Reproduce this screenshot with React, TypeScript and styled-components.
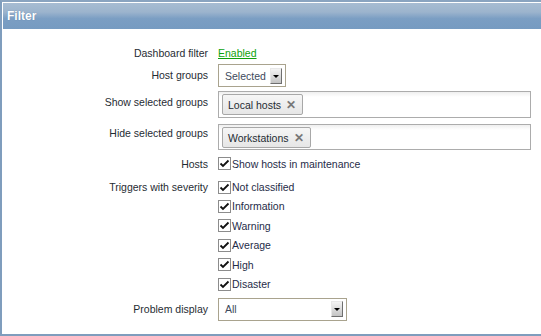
import styled, { createGlobalStyle } from "styled-components";

const GlobalStyle = createGlobalStyle`
  html, body {
    margin: 0;
    padding: 0;
    background: #ffffff;
  }
  body {
    font-family: "Liberation Sans", Arial, sans-serif;
    font-size: 10.5px;
    color: #1f2c33;
  }
`;

const Frame = styled.div`
  box-sizing: border-box;
  width: 541px;
  height: 336px;
  border-top: 2px solid #8aa4c0;
  border-left: 2px solid #7f9dbd;
  border-bottom: 2px solid #7f9dbd;
  padding: 1px 0 0 1px;
  display: flex;
  flex-direction: column;
`;

const Header = styled.div`
  height: 26px;
  display: flex;
  align-items: center;
  padding-left: 4px;
  background: linear-gradient(to bottom, #a7bcd2 0%, #9cb4cd 35%, #7b9ec3 60%, #769bc1 100%);
  color: #ffffff;
  font-weight: bold;
  font-size: 12px;
  text-shadow: 0 0 1px #5c7ea3;
`;

const Form = styled.div`
  display: flex;
  flex-direction: column;
  padding-top: 17px;
`;

const Row = styled.div<{ $gap?: number; $pad?: number }>`
  display: flex;
  align-items: flex-start;
  margin-top: ${(p) => p.$gap ?? 0}px;

  & > label {
    padding-top: ${(p) => p.$pad ?? 0}px;
  }
`;

const Label = styled.label`
  width: 205px;
  padding-right: 10px;
  text-align: right;
  line-height: 14px;
  flex-shrink: 0;
`;

const Control = styled.div`
  flex: 1;
  display: flex;
  flex-direction: column;
`;

const Link = styled.a`
  color: #0ca20c;
  text-decoration: underline;
  line-height: 14px;
`;

const Select = styled.div<{ $width: number }>`
  box-sizing: border-box;
  width: ${(p) => p.$width}px;
  height: 23px;
  border: 1px solid #a9a38e;
  display: flex;
  align-items: center;
  justify-content: space-between;
  padding: 0 3px 0 6px;
  color: #3d4a5c;
  background: #ffffff;
`;

const Arrow = styled.span`
  box-sizing: border-box;
  width: 12px;
  height: 16px;
  border: 1px solid #6f6f6f;
  border-top-color: #e8e8e8;
  border-left-color: #e8e8e8;
  background: linear-gradient(to bottom, #f4f4f4, #c4c4c4);
  display: flex;
  align-items: center;
  justify-content: center;

  &::after {
    content: "";
    border-left: 3px solid transparent;
    border-right: 3px solid transparent;
    border-top: 3px solid #000000;
    margin-top: 1px;
  }
`;

const Multi = styled.div<{ $height: number }>`
  box-sizing: border-box;
  width: 313px;
  height: ${(p) => p.$height}px;
  border: 1px solid #acacac;
  background: linear-gradient(to bottom, #efefef 0px, #ffffff 5px);
  padding: 2px 3px;
  display: flex;
  align-items: flex-start;
`;

const Chip = styled.span`
  box-sizing: border-box;
  height: 21px;
  display: inline-flex;
  align-items: center;
  gap: 5px;
  padding: 0 6px 0 5px;
  border: 1px solid #a8a8a8;
  border-radius: 2px;
  background: linear-gradient(to bottom, #f6f6f6, #e6e6e6);
  color: #1f2c33;
`;

const Remove = styled.span`
  color: #777777;
  font-weight: bold;
  font-size: 12px;
`;

const Check = styled.span`
  display: flex;
  align-items: center;
  height: 19.4px;
  line-height: 14px;
  color: #1f2c48;

  & svg {
    margin-right: 1px;
    flex-shrink: 0;
  }
`;

function Box() {
  return (
    <svg width="13" height="13" viewBox="0 0 13 13">
      <rect x="0.5" y="0.5" width="12" height="12" fill="#ffffff" stroke="#8c8c8c" />
      <path d="M2.5 6.5 L5 9 L10.5 3.5" fill="none" stroke="#111111" strokeWidth="1.8" />
    </svg>
  );
}

const severities = ["Not classified", "Information", "Warning", "Average", "High", "Disaster"];

export default function App() {
  return (
    <>
      <GlobalStyle />
      <Frame>
        <Header>Filter</Header>
        <Form>
          <Row>
            <Label>Dashboard filter</Label>
            <Control>
              <Link href="#">Enabled</Link>
            </Control>
          </Row>
          <Row $gap={4} $pad={4}>
            <Label>Host groups</Label>
            <Control>
              <Select $width={68}>
                Selected
                <Arrow />
              </Select>
            </Control>
          </Row>
          <Row $gap={4} $pad={4}>
            <Label>Show selected groups</Label>
            <Control>
              <Multi $height={27}>
                <Chip>
                  Local hosts <Remove>✕</Remove>
                </Chip>
              </Multi>
            </Control>
          </Row>
          <Row $gap={6} $pad={2}>
            <Label>Hide selected groups</Label>
            <Control>
              <Multi $height={26}>
                <Chip>
                  Workstations <Remove>✕</Remove>
                </Chip>
              </Multi>
            </Control>
          </Row>
          <Row $gap={4} $pad={3}>
            <Label>Hosts</Label>
            <Control>
              <Check>
                <Box />
                Show hosts in maintenance
              </Check>
            </Control>
          </Row>
          <Row $gap={4} $pad={3}>
            <Label>Triggers with severity</Label>
            <Control>
              {severities.map((s) => (
                <Check key={s}>
                  <Box />
                  {s}
                </Check>
              ))}
            </Control>
          </Row>
          <Row $gap={4} $pad={4}>
            <Label>Problem display</Label>
            <Control>
              <Select $width={129}>
                All
                <Arrow />
              </Select>
            </Control>
          </Row>
        </Form>
      </Frame>
    </>
  );
}
